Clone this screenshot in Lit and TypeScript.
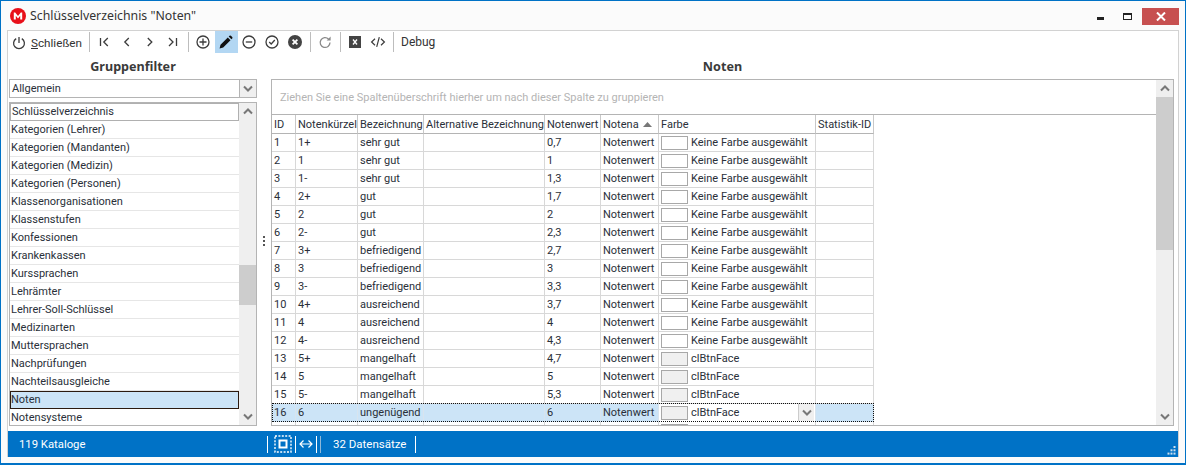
import { LitElement, css, html, svg } from 'lit'
import { customElement } from 'lit/decorators.js'

const groups = [
  'Kategorien (Lehrer)', 'Kategorien (Mandanten)', 'Kategorien (Medizin)', 'Kategorien (Personen)',
  'Klassenorganisationen', 'Klassenstufen', 'Konfessionen', 'Krankenkassen', 'Kurssprachen', 'Lehrämter',
  'Lehrer-Soll-Schlüssel', 'Medizinarten', 'Muttersprachen', 'Nachprüfungen', 'Nachteilsausgleiche',
]

const rows = [
  ['1', '1+', 'sehr gut', '0,7'], ['2', '1', 'sehr gut', '1'], ['3', '1-', 'sehr gut', '1,3'],
  ['4', '2+', 'gut', '1,7'], ['5', '2', 'gut', '2'], ['6', '2-', 'gut', '2,3'],
  ['7', '3+', 'befriedigend', '2,7'], ['8', '3', 'befriedigend', '3'], ['9', '3-', 'befriedigend', '3,3'],
  ['10', '4+', 'ausreichend', '3,7'], ['11', '4', 'ausreichend', '4'], ['12', '4-', 'ausreichend', '4,3'],
  ['13', '5+', 'mangelhaft', '4,7'], ['14', '5', 'mangelhaft', '5'], ['15', '5-', 'mangelhaft', '5,3'],
  ['16', '6', 'ungenügend', '6'],
]

const icon = (body: unknown) => html`<svg width="16" height="16" viewBox="0 0 16 16" fill="none"
  stroke="#3c3c3c" stroke-width="1.3">${body}</svg>`

const icons = {
  power: svg`<path d="M5.2 3.6a5.4 5.4 0 1 0 5.6 0"/><path d="M8 2v6"/>`,
  first: svg`<path d="M4.5 4v8M11.8 4 7.8 8l4 4"/>`,
  prev: svg`<path d="M9.8 4 5.8 8l4 4"/>`,
  next: svg`<path d="M5.8 4l4 4-4 4"/>`,
  last: svg`<path d="M11.5 4v8M4 4l4 4-4 4"/>`,
  add: svg`<circle cx="8" cy="8" r="6"/><path d="M8 4.5v7M4.5 8h7"/>`,
  edit: svg`<path fill="#111" stroke="none" d="M1.6 14.4l.9-3.6 7.3-7.3 2.7 2.7-7.3 7.3zM10.7 2.6l.8-.8a1 1 0 0 1 1.4 0l1.3 1.3a1 1 0 0 1 0 1.4l-.8.8z"/>`,
  remove: svg`<circle cx="8" cy="8" r="6"/><path d="M4.8 8h6.4"/>`,
  ok: svg`<circle cx="8" cy="8" r="6"/><path d="M5.2 8l2 2L10.8 6"/>`,
  cancel: svg`<circle cx="8" cy="8" r="7" fill="#444" stroke="none"/><path stroke="#fff" stroke-width="1.8" d="M5.6 5.6l4.8 4.8M10.4 5.6l-4.8 4.8"/>`,
  refresh: svg`<path stroke="#8a8a8a" d="M13 8.6a4.9 4.9 0 1 1-1.5-3.6"/><path fill="#8a8a8a" stroke="none" d="M13.6 2.6v4h-4z"/>`,
  excel: svg`<rect x="2" y="2" width="12" height="12" fill="#444" stroke="none"/><path stroke="#fff" stroke-width="1.3" d="M6 5.5l4 5M10 5.5l-4 5"/>`,
  code: svg`<path stroke-width="1.2" d="M5 4.8 1.6 8 5 11.2M11 4.8 14.4 8 11 11.2M9.3 3.2l-2.6 9.6"/>`,
}

const chevUp = html`<svg width="10" height="7" viewBox="0 0 10 7"><path d="M1 5.5 5 1.5l4 4" fill="none" stroke="#777" stroke-width="2"/></svg>`
const chevDown = html`<svg width="10" height="7" viewBox="0 0 10 7"><path d="M1 1.5 5 5.5l4-4" fill="none" stroke="#777" stroke-width="2"/></svg>`

@customElement('app-root')
export class AppRoot extends LitElement {
  private btn(name: keyof typeof icons, active = false) {
    return html`<span class="tool ${active ? 'active' : ''}">${icon(icons[name])}</span>`
  }

  private row(r: string[], i: number) {
    const face = i >= 12
    const selected = i === 15
    return html`
      <div class="row ${selected ? 'selected' : ''}">
        <span class="cell">${r[0]}</span>
        <span class="cell">${r[1]}</span>
        <span class="cell">${r[2]}</span>
        <span class="cell"></span>
        <span class="cell">${r[3]}</span>
        <span class="cell">Notenwert</span>
        <span class="cell color ${selected ? 'editing' : ''}">
          <i class="swatch ${face ? 'face' : ''}"></i>
          <span class="color-name">${face ? 'clBtnFace' : 'Keine Farbe ausgewählt'}</span>
          ${selected ? html`<span class="drop">${chevDown}</span>` : ''}
        </span>
        <span class="cell"></span>
      </div>
    `
  }

  render() {
    return html`
      <div class="window">
        <header class="titlebar">
          <svg class="logo" width="16" height="16" viewBox="0 0 16 16">
            <circle cx="8" cy="8" r="8" fill="#e8101a"/>
            <path d="M3.8 11.5V4.6h1.4L8 8l2.8-3.4h1.4v6.9h-2V7.8L8 10.4 5.8 7.8v3.7z" fill="#fff"/>
          </svg>
          <span class="title">Schlüsselverzeichnis "Noten"</span>
          <span class="controls">
            <span class="min"></span>
            <span class="max"></span>
            <span class="close">
              <svg width="10" height="9" viewBox="0 0 10 9"><path d="M1 .5l8 8M9 .5l-8 8" stroke="#fff" stroke-width="2"/></svg>
            </span>
          </span>
        </header>

        <div class="frame">
          <nav class="toolbar">
            <span class="close-btn">${icon(icons.power)}<span class="label"><u>S</u>chließen</span></span>
            <i class="sep first"></i>
            ${this.btn('first')}${this.btn('prev')}${this.btn('next')}${this.btn('last')}
            <i class="sep"></i>
            ${this.btn('add')}${this.btn('edit', true)}${this.btn('remove')}${this.btn('ok')}${this.btn('cancel')}
            <i class="sep"></i>
            ${this.btn('refresh')}
            <i class="sep"></i>
            ${this.btn('excel')}${this.btn('code')}
            <i class="sep"></i>
            <span class="debug">Debug</span>
          </nav>

          <main class="panes">
            <section class="left">
              <h2>Gruppenfilter</h2>
              <div class="combo"><span>Allgemein</span><span class="combo-btn">${chevDown}</span></div>
              <div class="list">
                <div class="items">
                  <div class="item focused">Schlüsselverzeichnis</div>
                  ${groups.map(g => html`<div class="item">${g}</div>`)}
                  <div class="item current">Noten</div>
                  <div class="item">Notensysteme</div>
                </div>
                <div class="scroll">
                  <span class="arrow">${chevUp}</span>
                  <span class="track"><i class="thumb list-thumb"></i></span>
                  <span class="arrow">${chevDown}</span>
                </div>
              </div>
            </section>

            <div class="splitter"><i></i><i></i><i></i></div>

            <section class="right">
              <h2>Noten</h2>
              <div class="grid-box">
                <div class="grid-main">
                  <div class="group-hint">Ziehen Sie eine Spaltenüberschrift hierher um nach dieser Spalte zu gruppieren</div>
                  <div class="row head">
                    <span class="cell">ID</span>
                    <span class="cell">Notenkürzel</span>
                    <span class="cell">Bezeichnung</span>
                    <span class="cell">Alternative Bezeichnung</span>
                    <span class="cell">Notenwert</span>
                    <span class="cell sorted">Notena<svg width="9" height="5" viewBox="0 0 9 5"><path d="M4.5 0 9 5H0z" fill="#777"/></svg></span>
                    <span class="cell">Farbe</span>
                    <span class="cell">Statistik-ID</span>
                  </div>
                  ${rows.map((r, i) => this.row(r, i))}
                  <div class="row stub">
                    <span class="cell"></span><span class="cell"></span><span class="cell"></span><span class="cell"></span>
                    <span class="cell"></span><span class="cell"></span>
                    <span class="cell color"><i class="swatch face"></i></span>
                    <span class="cell"></span>
                  </div>
                </div>
                <div class="scroll">
                  <span class="arrow">${chevUp}</span>
                  <span class="track"><i class="thumb grid-thumb"></i></span>
                  <span class="arrow">${chevDown}</span>
                </div>
              </div>
            </section>
          </main>

          <footer class="status">
            <span class="count">119 Kataloge</span>
            <i class="bar"></i>
            <svg class="st-icon" width="18" height="18" viewBox="0 0 18 18" fill="none" stroke="#fff">
              <rect x="1" y="1" width="16" height="16" stroke-width="1.4" stroke-dasharray="2 1.4"/>
              <rect x="5.5" y="5.5" width="7" height="7" stroke-width="2"/>
            </svg>
            <i class="bar tight"></i>
            <svg class="st-icon wide" width="14" height="10" viewBox="0 0 14 10" fill="none" stroke="#fff" stroke-width="1.2">
              <path d="M1 5h12M4.5 1.5 1 5l3.5 3.5M9.5 1.5 13 5l-3.5 3.5"/>
            </svg>
            <i class="bar tight"></i>
            <i class="bar muted"></i>
            <span class="records">32 Datensätze</span>
            <i class="bar"></i>
            <span class="grip">
              <svg width="9" height="9" viewBox="0 0 9 9" fill="#cfe0ee">
                <rect x="6.5" y="0" width="2" height="2"/><rect x="3.5" y="3.3" width="2" height="2"/>
                <rect x="6.5" y="3.3" width="2" height="2"/><rect x="0.5" y="6.6" width="2" height="2"/>
                <rect x="3.5" y="6.6" width="2" height="2"/><rect x="6.5" y="6.6" width="2" height="2"/>
              </svg>
            </span>
          </footer>
        </div>
      </div>
    `
  }

  static styles = css`
    :host {
      display: block;
      width: 1186px;
      height: 465px;
      font-family: Roboto, "Noto Sans", sans-serif;
      font-size: 11px;
      color: #2a3039;
    }
    * { box-sizing: border-box; }
    i { display: block; }

    .window {
      height: 465px;
      display: flex;
      flex-direction: column;
      background: #fbfbfb;
      border: 1px solid #0072c6;
      border-bottom-width: 2px;
      padding: 0 6px 6px 6px;
    }

    .titlebar {
      flex: 0 0 29px;
      display: flex;
      align-items: center;
      margin-left: 3px;
    }
    .logo { margin-right: 4px; }
    .title { font-size: 12.3px; font-family: "Noto Sans", sans-serif; color: #333; }
    .controls { margin-left: auto; display: flex; align-items: flex-start; align-self: flex-start; padding-top: 7px; }
    .min { width: 7px; height: 3px; background: #222; margin: 9px 0 0 0; }
    .max { width: 9px; height: 7px; border: 1px solid #222; border-top-width: 2px; margin: 5px 0 0 19px; }
    .close {
      width: 37px;
      height: 17px;
      background: #c75050;
      display: flex;
      align-items: center;
      justify-content: center;
      margin-left: 10px;
    }

    .frame {
      flex: 1;
      min-height: 0;
      display: flex;
      flex-direction: column;
      background: #fff;
      border-top: 1px solid #d2d2d2;
      border-left: 1px solid #d2d2d2;
      border-right: 1px solid #d2d2d2;
    }

    .toolbar {
      flex: 0 0 24px;
      display: flex;
      align-items: flex-start;
      font-size: 12px;
      color: #333;
    }
    .close-btn { width: 81px; height: 23px; display: flex; align-items: center; padding-left: 3px; }
    .label { margin-left: 4px; font-size: 11.7px; }
    .tool {
      width: 23px;
      height: 22px;
      padding-right: 1px;
      display: flex;
      align-items: center;
      justify-content: center;
    }
    .tool.active { background: #b3d7f3; }
    .sep { width: 1px; height: 20px; background: #bdbdbd; margin: 1px 3px 0; }
    .sep.first { margin-left: 0; }
    .debug { margin-left: 4px; line-height: 22px; }

    .panes {
      flex: 1;
      min-height: 0;
      display: flex;
      padding: 0 4px 5px 1px;
    }
    h2 {
      margin: 0;
      flex: 0 0 23px;
      font-family: "Noto Sans", sans-serif;
      font-size: 12.6px;
      font-weight: 700;
      line-height: 24px;
      text-align: center;
      color: #3a3a3a;
    }
    .left { width: 248px; display: flex; flex-direction: column; }
    .right { flex: 1; min-width: 0; display: flex; flex-direction: column; }

    .combo {
      flex: 0 0 19px;
      display: flex;
      align-items: center;
      justify-content: space-between;
      border: 1px solid #b4b4b4;
      padding-left: 2px;
    }
    .combo-btn {
      width: 17px;
      height: 17px;
      background: #efefef;
      border-left: 1px solid #b4b4b4;
      display: flex;
      align-items: center;
      justify-content: center;
    }

    .list {
      margin-top: 4px;
      flex: 1;
      min-height: 0;
      display: flex;
      border: 1px solid #b4b4b4;
    }
    .items { flex: 1; min-width: 0; overflow: hidden; }
    .item {
      height: 18px;
      line-height: 17px;
      padding-left: 1px;
      border-bottom: 1px solid #e6e6e6;
      white-space: nowrap;
    }
    .item.focused { border: 1px solid #b0b0b0; line-height: 15px; }
    .item.current { background: #cce4f7; border: 1px solid #2b1a10; padding-left: 0; line-height: 16px; }

    .scroll {
      width: 17px;
      flex: none;
      display: flex;
      flex-direction: column;
      background: #efefef;
    }
    .arrow {
      flex: 0 0 17px;
      display: flex;
      align-items: center;
      justify-content: center;
    }
    .track { flex: 1; min-height: 0; }
    .thumb { background: #cdcdcd; }
    .list-thumb { height: 40px; margin-top: 145px; }
    .grid-thumb { height: 153px; }

    .splitter {
      width: 14px;
      flex: none;
      display: flex;
      flex-direction: column;
      align-items: center;
      justify-content: center;
      gap: 2px;
    }
    .splitter i { width: 2px; height: 2px; background: #555; }

    .grid-box {
      flex: 1;
      min-height: 0;
      display: flex;
      border: 1px solid #b4b4b4;
    }
    .grid-main { flex: 1; min-width: 0; overflow: hidden; }
    .group-hint {
      height: 35px;
      padding: 11px 0 0 8px;
      color: #b4b4b4;
      border-bottom: 1px solid #b4b4b4;
      white-space: nowrap;
    }
    .row {
      display: grid;
      grid-template-columns: 24px 62px 66px 121px 56px 58px 157px 58px;
      width: 602px;
      height: 18px;
      position: relative;
    }
    .row.head { height: 19px; }
    .cell {
      display: flex;
      align-items: center;
      padding-left: 2px;
      border-right: 1px solid #d8d8d8;
      border-bottom: 1px solid #d8d8d8;
      white-space: nowrap;
      overflow: hidden;
    }
    .head .cell { border-color: #b4b4b4; border-right-color: #c8c8c8; }
    .sorted { justify-content: space-between; padding-right: 6px; }
    .swatch {
      width: 27px;
      height: 14px;
      flex: none;
      border: 1px solid #a8a8a8;
      background: #fff;
      margin-right: 3px;
    }
    .swatch.face { background: #f0f0f0; }
    .color { position: relative; }
    .selected { background: #cce4f7; }
    .selected::after {
      content: '';
      position: absolute;
      inset: -1px 0 0 0;
      border: 1px dotted #111;
      pointer-events: none;
    }
    .selected .cell { border-bottom-color: transparent; border-right-color: #d8e4ee; }
    .editing { background: #fff; }
    .drop {
      position: absolute;
      right: 1px;
      top: 0;
      width: 16px;
      height: 17px;
      background: #efefef;
      border-left: 1px solid #ccc;
      display: flex;
      align-items: center;
      justify-content: center;
    }

    .status {
      flex: 0 0 26px;
      display: flex;
      align-items: center;
      background: #0072c6;
      color: #fff;
      font-size: 11.5px;
      position: relative;
    }
    .count { width: 259px; padding-left: 11px; font-size: 11.3px; }
    .bar { width: 1px; height: 17px; background: #fff; }
    .bar.tight { margin-left: 3px; }
    .bar.muted { background: #8fb8d8; margin-left: 3px; }
    .st-icon { margin-left: 6px; }
    .st-icon.wide { margin-left: 3px; }
    .records { margin: 0 9px 0 12px; }
    .grip { position: absolute; right: 2px; bottom: 2px; display: flex; }
  `
}

declare global {
  interface HTMLElementTagNameMap {
    'app-root': AppRoot
  }
}
